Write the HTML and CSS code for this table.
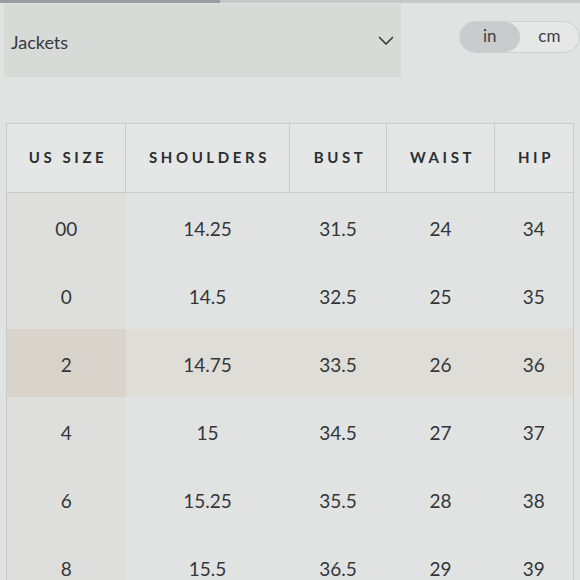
FILE: index.html
```html
<!DOCTYPE html>
<html>
<head>
<meta charset="utf-8">
<link rel="stylesheet" href="styles.css">
</head>
<body>
<div class="topbar"><span class="topbar-dark"></span></div>
<div class="controls">
  <div class="select">
    <span class="select-label">Jackets</span>
    <svg class="chevron" width="18" height="12" viewBox="0 0 18 12"><path d="M2.5 2.5 L9 9 L15.5 2.5" fill="none" stroke="#3a3c3e" stroke-width="1.7" stroke-linecap="round" stroke-linejoin="round"/></svg>
  </div>
  <div class="toggle">
    <span class="toggle-opt active">in</span>
    <span class="toggle-opt">cm</span>
  </div>
</div>
<table class="sizes">
  <colgroup>
    <col class="c1"><col class="c2"><col class="c3"><col class="c4"><col class="c5">
  </colgroup>
  <thead>
    <tr><th>US SIZE</th><th>SHOULDERS</th><th>BUST</th><th>WAIST</th><th>HIP</th></tr>
  </thead>
  <tbody>
    <tr><td>00</td><td>14.25</td><td>31.5</td><td>24</td><td>34</td></tr>
    <tr><td>0</td><td>14.5</td><td>32.5</td><td>25</td><td>35</td></tr>
    <tr class="hl"><td>2</td><td>14.75</td><td>33.5</td><td>26</td><td>36</td></tr>
    <tr><td>4</td><td>15</td><td>34.5</td><td>27</td><td>37</td></tr>
    <tr><td>6</td><td>15.25</td><td>35.5</td><td>28</td><td>38</td></tr>
    <tr><td>8</td><td>15.5</td><td>36.5</td><td>29</td><td>39</td></tr>
  </tbody>
</table>
</body>
</html>
```
FILE: styles.css
```css
html, body {
  margin: 0;
  padding: 0;
  background: #e0e3e2;
  font-family: Lato, "Open Sans", sans-serif;
  color: #3a3c3e;
  overflow: hidden;
}
.topbar {
  height: 3px;
  background: #c6c9c9;
  display: flex;
}
.topbar-dark {
  width: 220px;
  background: #9a9da0;
}
.controls {
  display: flex;
  align-items: flex-start;
  padding: 1px 0 0 4px;
}
.select {
  width: 399px;
  height: 73px;
  background: #d8dad8;
  display: flex;
  align-items: center;
  box-sizing: border-box;
  padding: 0 6px 0 7px;
}
.select-label {
  font-size: 18px;
  color: #37393c;
  flex: 1;
  margin-top: 2px;
}
.chevron {
  margin-top: 0;
}
.toggle {
  margin-left: 58px;
  margin-top: 17px;
  height: 32px;
  width: 122px;
  border-radius: 16px;
  border: 1px solid #cdd0d0;
  background: #e5e8e7;
  display: flex;
  align-items: center;
  overflow: hidden;
  box-sizing: border-box;
}
.toggle-opt {
  flex: 1;
  height: 100%;
  display: flex;
  align-items: center;
  justify-content: center;
  font-size: 17px;
  color: #3e4043;
  padding-bottom: 3px;
  box-sizing: border-box;
}
.toggle-opt.active {
  background: #c9cccc;
  border-radius: 16px;
  flex: 0 0 60px;
}
.sizes {
  margin: 46px 0 0 6px;
  border-collapse: collapse;
  width: 567px;
  table-layout: fixed;
}
.c1 { width: 119px; }
.c2 { width: 164px; }
.c3 { width: 97px; }
.c4 { width: 108px; }
.c5 { width: 79px; }
.sizes th {
  height: 66px;
  border: 1.5px solid #c7cbcb;
  background: #e4e7e6;
  font-size: 15px;
  font-weight: 700;
  letter-spacing: 3.6px;
  color: #2b2e32;
  text-align: center;
  padding: 0 0 2px 4px;
}
.sizes td {
  height: 64px;
  padding: 3px 0 1px 0;
  text-align: center;
  font-size: 19px;
  color: #34363a;
  background: #e0e3e2;
}
.sizes td:first-child {
  background: #dedfdc;
  border-left: 1.5px solid #c7cbcb;
}
.sizes td:last-child {
  border-right: 1.5px solid #c7cbcb;
}
.sizes tr.hl td {
  background: #dfddd7;
}
.sizes tr.hl td:first-child {
  background: #d9d4cb;
}
```
